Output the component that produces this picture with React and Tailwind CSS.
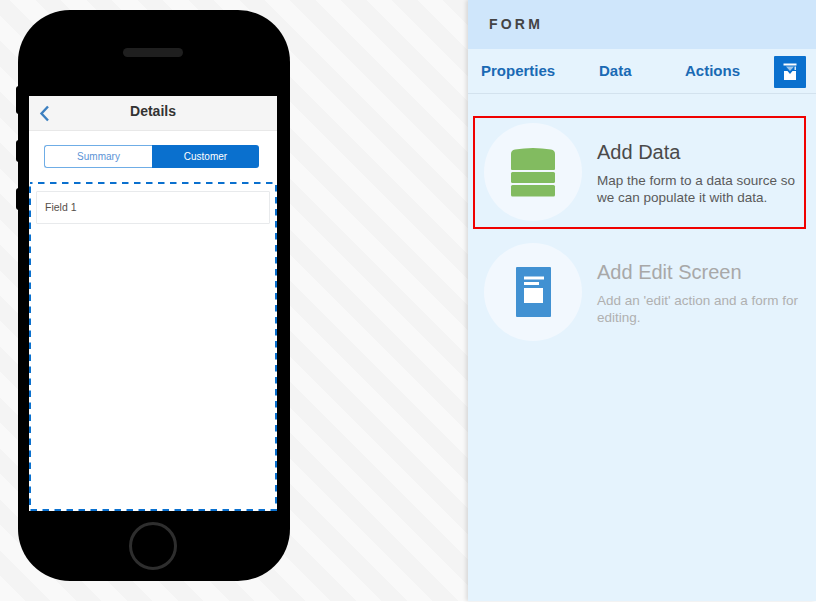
// แผงฟอร์มด้านขวา: รายการการทำงานที่เพิ่มได้
const ACTIONS = [
  {
    title: 'Add Data',
    lines: ['Map the form to a data source so', 'we can populate it with data.'],
    icon: 'data',
    active: true,
  },
  {
    title: 'Add Edit Screen',
    lines: ["Add an 'edit' action and a form for", 'editing.'],
    icon: 'edit',
    active: false,
  },
];

function DataIcon() {
  return (
    <svg width="46" height="50" viewBox="0 0 46 50">
      <path d="M1 7 Q1 3 5 2.5 Q23 -0.5 41 2.5 Q45 3 45 7 V22 Q45 23 44 23 H2 Q1 23 1 22 Z" fill="#82bb60" />
      <rect x="1" y="25" width="44" height="11" rx="1.5" fill="#82bb60" />
      <rect x="1" y="38" width="44" height="11.5" rx="1.5" fill="#82bb60" />
    </svg>
  );
}

function EditIcon() {
  return (
    <svg width="35" height="50" viewBox="0 0 35 50">
      <rect x="0" y="0" width="35" height="50" rx="1" fill="#4191d2" />
      <rect x="8" y="9.5" width="20" height="3" fill="#fff" />
      <rect x="8" y="15" width="15" height="3" fill="#fff" />
      <rect x="8" y="21" width="19" height="15" fill="#fff" />
    </svg>
  );
}

function ToolIcon() {
  return (
    <svg width="16" height="18" viewBox="0 0 16 18">
      <path d="M1.5 0.5 H14.5 V2.5 H1.5 Z" fill="#fff" />
      <path d="M4 3.5 H12 L8 8 Z" fill="#fff" opacity="0.6" />
      <path d="M12.5 3.5 H14 V7 H12.5 Z" fill="#fff" opacity="0.85" />
      <path d="M2 8 H5.5 L8 11 L10.5 8 H14 V17 H2 Z" fill="#fff" />
    </svg>
  );
}

function Phone() {
  return (
    <div className="relative w-[272px] h-[571px] mt-[10px] ml-[18px] pr-[2px] bg-black rounded-[52px] flex flex-col items-center">
      {/* ปุ่มข้างเครื่อง */}
      <div className="absolute left-[-2px] top-[76px] w-[3px] h-[28px] bg-black rounded-l-sm" />
      <div className="absolute left-[-2px] top-[130px] w-[3px] h-[22px] bg-black rounded-l-sm" />
      <div className="absolute left-[-2px] top-[178px] w-[3px] h-[22px] bg-black rounded-l-sm" />

      <div className="w-[60px] h-[9px] mt-[38px] rounded-full bg-[#1f1f1f]" />

      <div className="w-[248px] h-[415px] mt-[39px] bg-white flex flex-col">
        <div className="relative h-[35px] pb-[3px] bg-[#f5f5f5] border-b border-[#e8e8e8] flex items-center justify-center">
          <svg className="absolute left-[10px] top-[9px]" width="11" height="17" viewBox="0 0 11 17">
            <path d="M9 1.5 L2.5 8.5 L9 15.5" fill="none" stroke="#3d80c0" strokeWidth="2.4" />
          </svg>
          <span className="text-[14px] font-bold text-[#333]">Details</span>
        </div>

        <div className="mt-[14px] ml-[15px] mr-[18px] h-[23px] flex text-[10px]">
          <div className="w-[108px] flex items-center justify-center bg-white border border-[#6fade6] border-r-0 rounded-l-[3px] text-[#5c93d6]">
            Summary
          </div>
          <div className="flex-1 flex items-center justify-center bg-[#0a70ce] rounded-r-[3px] text-white">
            Customer
          </div>
        </div>

        <div className="relative flex-1 mt-[14px] px-[7px] pt-[9px]">
          {/* เส้นประรอบพื้นที่ที่เลือก */}
          <svg className="absolute left-0 top-0" width="248" height="329" viewBox="0 0 248 329">
            <rect x="1" y="1" width="246" height="327" fill="none" stroke="#0a70ce" strokeWidth="2" strokeDasharray="6.5 5.5" strokeDashoffset="4" />
          </svg>
          <div className="h-[33px] border border-[#e8eaec] rounded-[1px] flex items-center pl-[8px] text-[10.5px] text-[#55504a]">
            Field 1
          </div>
        </div>
      </div>

      <div className="w-[48px] h-[48px] mt-[11px] rounded-full border-[3px] border-[#2e2e2e]" />
    </div>
  );
}

function ActionRow({ action }) {
  return (
    <div
      className={`h-[113px] flex items-start pl-[9px] pt-[5px] border-2 ${
        action.active ? 'border-[#f00000]' : 'border-transparent'
      }`}
    >
      <div className="w-[98px] h-[98px] shrink-0 rounded-full bg-[#f2f8fe] flex items-center justify-center">
        {action.icon === 'data' ? <DataIcon /> : <EditIcon />}
      </div>
      <div className="ml-[15px] pt-[15px]">
        <div className={`text-[20px] leading-[28px] ${action.active ? 'text-[#4a4a4a]' : 'text-[#a8a8a8]'}`}>
          {action.title}
        </div>
        <div className={`mt-[6px] text-[13.5px] leading-[17px] whitespace-nowrap ${action.active ? 'text-[#5a5a5a]' : 'text-[#b0b0b0]'}`}>
          {action.lines.map((l) => (
            <div key={l}>{l}</div>
          ))}
        </div>
      </div>
    </div>
  );
}

export default function App() {
  return (
    <div className="w-[816px] h-[602px] bg-white overflow-hidden">
      <div className="h-[601px] flex font-['Liberation_Sans',sans-serif] bg-[repeating-linear-gradient(45deg,#f9f9f9_0px,#f9f9f9_18px,#f4f4f4_18px,#f4f4f4_36px)]">
        <div className="w-[468px] shrink-0">
          <Phone />
        </div>

        <div className="flex-1 bg-[#e5f3fd] shadow-[-2px_0_4px_rgba(0,0,0,0.12)] flex flex-col">
          <div className="h-[49px] bg-[#cfe6fb] flex items-center pl-[21px] text-[14px] font-bold tracking-[3.2px] text-[#444]">
            FORM
          </div>

          <div className="h-[45px] border-b border-[#d3e2ee] flex items-center pl-[13px] text-[15px] font-bold text-[#1a6ab4]">
            <span className="w-[118px]">Properties</span>
            <span className="w-[86px]">Data</span>
            <span className="w-[89px]">Actions</span>
            <div className="w-[32px] h-[32px] mt-[2px] bg-[#0a70ce] rounded-[1px] flex items-center justify-center">
              <ToolIcon />
            </div>
          </div>

          <div className="pt-[22px] pl-[5px] pr-[10px] flex flex-col gap-[7px]">
            {ACTIONS.map((a) => (
              <ActionRow key={a.title} action={a} />
            ))}
          </div>
        </div>
      </div>
    </div>
  );
}
